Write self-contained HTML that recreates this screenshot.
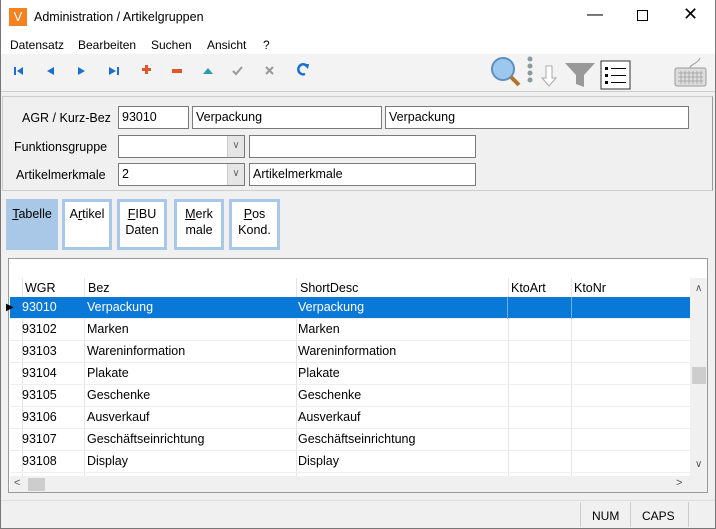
<!DOCTYPE html><html><head><style>
*{box-sizing:border-box;margin:0;padding:0}
body{width:716px;height:529px;position:relative;background:#f0f0f0;font-family:"Liberation Sans",sans-serif;font-size:12px;color:#000;overflow:hidden}
.a{position:absolute}
.inp{position:absolute;background:#fff;border:1px solid #7a7a7a;height:23px;padding:3px 3px;font-size:12.5px}
.dd{position:absolute;width:17px;height:21px;background:#e5e5e5;border-left:1px solid #ccc;color:#666;font-size:10px;text-align:center;line-height:20px}
.tab{position:absolute;top:199px;height:51px;background:#fff;border:3px solid #a9c8e8;text-align:center;font-size:12.5px;line-height:16px;padding-top:4px}
.row{position:absolute;left:10px;width:680px;height:22px;border-bottom:1px solid #eee;font-size:12.5px;line-height:21px}
.row span{position:absolute;top:0}
.vl{position:absolute;top:278px;height:198px;width:1px;background:#e4e4e4}
</style></head><body>
<div class="a" style="left:0;top:0;width:716px;height:34px;background:#fff"></div>
<div class="a" style="left:9px;top:8px;width:18px;height:18px;background:#f58220;color:#fff;font-size:13px;text-align:center;line-height:18px">V</div>
<div class="a" style="left:34px;top:10px;font-size:12.5px">Administration / Artikelgruppen</div>
<div class="a" style="left:587px;top:6px;font-size:16px">&#8212;</div>
<div class="a" style="left:637px;top:10px;width:11px;height:11px;border:1px solid #000"></div>
<div class="a" style="left:683px;top:4px;font-size:18px">&#10005;</div>
<div class="a" style="left:0;top:34px;width:716px;height:20px;background:#fff"></div>
<div class="a" style="left:10px;top:38px;font-size:12px;word-spacing:0">Datensatz</div>
<div class="a" style="left:78px;top:38px">Bearbeiten</div>
<div class="a" style="left:151px;top:38px">Suchen</div>
<div class="a" style="left:207px;top:38px">Ansicht</div>
<div class="a" style="left:263px;top:38px">?</div>
<div class="a" style="left:0;top:54px;width:716px;height:38px;background:#f3f3f3;border-bottom:1px solid #ccc"></div>
<svg class="a" style="left:0;top:54px" width="716" height="38">
<g fill="#1b6fd1"><rect x="14" y="13" width="2" height="8"/><path d="M17 17l6-4v8z"/><path d="M47 17l7-4v8z"/><path d="M78 13l7 4-7 4z"/><path d="M109 13l7 4-7 4z"/><rect x="117" y="13" width="2" height="8"/></g>
<path d="M142 14h3v-3h3v3h3v3h-3v3h-3v-3h-3z" fill="#e2572a"/>
<rect x="172" y="15" width="10" height="4" fill="#e2572a"/>
<path d="M203 20l5-6 5 6z" fill="#2a9ab0"/>
<path d="M233 17l3 3 6-7" stroke="#999" stroke-width="2" fill="none"/>
<path d="M266 13l7 7M273 13l-7 7" stroke="#999" stroke-width="2"/>
<path d="M305 20a5 5 0 1 1 2-8" stroke="#1b6fd1" stroke-width="2.5" fill="none"/><path d="M303 10l6 0-1 5z" fill="#1b6fd1"/>
<circle cx="503" cy="15" r="11" fill="#9cc8f0" stroke="#5f8fbf" stroke-width="2"/><path d="M511 23l8 8" stroke="#b5732c" stroke-width="4"/>
<g fill="#8a9aa0"><circle cx="530" cy="5" r="2.5"/><circle cx="530" cy="12" r="2.5"/><circle cx="530" cy="19" r="2.5"/><circle cx="530" cy="26" r="2.5"/></g>
<path d="M546 12v12h-4l7 8 7-8h-4v-12z" fill="#fff" stroke="#aaa"/>
<path d="M565 9h30l-11 12v12l-8-3v-9z" fill="#999"/>
<rect x="601" y="7" width="29" height="28" fill="#fff" stroke="#333"/>
<g fill="#000"><rect x="605" y="13" width="3" height="3"/><rect x="605" y="20" width="3" height="3"/><rect x="605" y="27" width="3" height="3"/><rect x="611" y="14" width="15" height="1"/><rect x="611" y="21" width="15" height="1"/><rect x="611" y="28" width="15" height="1"/></g>
<rect x="675" y="14" width="31" height="18" rx="2" fill="#ddd" stroke="#999"/><path d="M690 14c0-4 8-4 10-10" stroke="#999" fill="none"/>
<g stroke="#aaa" stroke-width="1"><path d="M678 19h25M678 23h25M678 27h25M681 17v13M685 17v13M689 17v13M693 17v13M697 17v13M701 17v13"/></g>
</svg>
<div class="a" style="left:2px;top:96px;width:711px;height:95px;border:1px solid #ccc;border-right-color:#999"></div>
<div class="a" style="left:22px;top:111px;font-size:12.5px">AGR / Kurz-Bez</div>
<div class="inp" style="left:118px;top:106px;width:71px">93010</div>
<div class="inp" style="left:192px;top:106px;width:190px">Verpackung</div>
<div class="inp" style="left:385px;top:106px;width:304px">Verpackung</div>
<div class="a" style="left:14px;top:140px;font-size:12.5px">Funktionsgruppe</div>
<div class="inp" style="left:118px;top:135px;width:127px"><div class="dd" style="right:0;top:0">&#8744;</div></div>
<div class="inp" style="left:249px;top:135px;width:227px"></div>
<div class="a" style="left:16px;top:168px;font-size:12.5px">Artikelmerkmale</div>
<div class="inp" style="left:118px;top:163px;width:127px">2<div class="dd" style="right:0;top:0">&#8744;</div></div>
<div class="inp" style="left:249px;top:163px;width:227px">Artikelmerkmale</div>
<div class="tab" style="left:6px;width:52px;background:#a9c8e8;border-color:#a9c8e8"><u>T</u>abelle</div>
<div class="tab" style="left:62px;width:50px">A<u>r</u>tikel</div>
<div class="tab" style="left:117px;width:50px"><u>F</u>IBU<br>Daten</div>
<div class="tab" style="left:174px;width:50px"><u>M</u>erk<br>male</div>
<div class="tab" style="left:229px;width:51px"><u>P</u>os<br>Kond.</div>
<div class="a" style="left:8px;top:258px;width:700px;height:235px;background:#fff;border:1px solid #999"></div>
<div class="a" style="left:10px;top:278px;width:680px;height:20px;border-bottom:1px solid #ddd"></div>
<div class="a" style="left:25px;top:281px;font-size:12.5px">WGR</div><div class="a" style="left:88px;top:281px;font-size:12.5px">Bez</div><div class="a" style="left:300px;top:281px;font-size:12.5px">ShortDesc</div><div class="a" style="left:511px;top:281px;font-size:12.5px">KtoArt</div><div class="a" style="left:574px;top:281px;font-size:12.5px">KtoNr</div>
<div class="vl" style="left:22px"></div><div class="vl" style="left:84px"></div><div class="vl" style="left:296px"></div><div class="vl" style="left:508px"></div><div class="vl" style="left:571px"></div>
<div class="row" style="top:297px;background:#0a78d7;color:#fff"><span style="left:-4px;color:#000;font-size:10px">&#9654;</span><span style="left:12px">93010</span><span style="left:77px">Verpackung</span><span style="left:288px">Verpackung</span><span style="left:497px;width:1px;height:22px;background:#6ab0ee"></span><span style="left:561px;width:1px;height:22px;background:#6ab0ee"></span></div>
<div class="row" style="top:319px"><span style="left:12px">93102</span><span style="left:77px">Marken</span><span style="left:288px">Marken</span></div>
<div class="row" style="top:341px"><span style="left:12px">93103</span><span style="left:77px">Wareninformation</span><span style="left:288px">Wareninformation</span></div>
<div class="row" style="top:363px"><span style="left:12px">93104</span><span style="left:77px">Plakate</span><span style="left:288px">Plakate</span></div>
<div class="row" style="top:385px"><span style="left:12px">93105</span><span style="left:77px">Geschenke</span><span style="left:288px">Geschenke</span></div>
<div class="row" style="top:407px"><span style="left:12px">93106</span><span style="left:77px">Ausverkauf</span><span style="left:288px">Ausverkauf</span></div>
<div class="row" style="top:429px"><span style="left:12px">93107</span><span style="left:77px">Geschäftseinrichtung</span><span style="left:288px">Geschäftseinrichtung</span></div>
<div class="row" style="top:451px"><span style="left:12px">93108</span><span style="left:77px">Display</span><span style="left:288px">Display</span></div>
<div class="a" style="left:690px;top:278px;width:17px;height:198px;background:#f0f0f0"></div>
<div class="a" style="left:695px;top:283px;font-size:10px;color:#555">&#8743;</div>
<div class="a" style="left:692px;top:367px;width:14px;height:17px;background:#cdcdcd"></div>
<div class="a" style="left:695px;top:459px;font-size:10px;color:#555">&#8744;</div>
<div class="a" style="left:10px;top:476px;width:697px;height:16px;background:#f0f0f0"></div>
<div class="a" style="left:14px;top:477px;font-size:11px;color:#555">&lt;</div>
<div class="a" style="left:28px;top:478px;width:17px;height:13px;background:#cdcdcd"></div>
<div class="a" style="left:676px;top:477px;font-size:11px;color:#555">&gt;</div>
<div class="a" style="left:0;top:500px;width:716px;height:29px;border-top:1px solid #ddd"></div>
<div class="a" style="left:580px;top:502px;width:1px;height:25px;background:#ccc"></div>
<div class="a" style="left:630px;top:502px;width:1px;height:25px;background:#ccc"></div>
<div class="a" style="left:688px;top:502px;width:1px;height:25px;background:#ccc"></div>
<div class="a" style="left:592px;top:509px">NUM</div>
<div class="a" style="left:642px;top:509px">CAPS</div>
<div class="a" style="left:0;top:0;width:716px;height:529px;border:1px solid #777;border-top:none"></div>
</body></html>
